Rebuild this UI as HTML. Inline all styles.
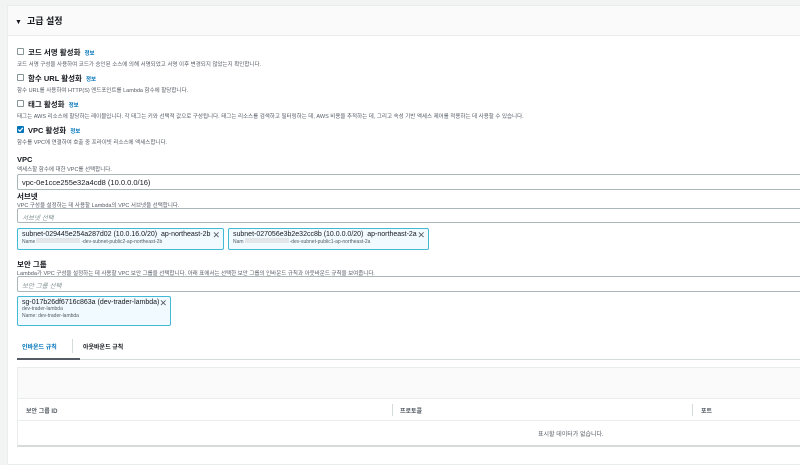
<!DOCTYPE html>
<html><head><meta charset="utf-8"><style>
*{margin:0;padding:0;box-sizing:border-box}
body{width:800px;height:450px;overflow:hidden;background:#f2f3f3;font-family:"Liberation Sans","Noto Sans CJK KR",sans-serif;color:#16191f;position:relative}
.card{position:absolute;left:7px;top:5px;width:800px;height:460px;background:#fff;border:1px solid #eaeded}
.hdr{position:absolute;left:0;top:0;width:100%;height:30px;background:#fafafa;border-bottom:1px solid #eaeded}
.a{position:absolute;white-space:nowrap}
.t{font-size:9px;font-weight:bold}
.b{font-size:7.5px;font-weight:bold}
.d{font-size:5.5px;color:#545b64}
.info{color:#0073bb;font-size:5.5px;font-weight:bold;margin-left:4px}
.cb{position:absolute;width:7px;height:7px;border:1px solid #879596;border-radius:1px;background:#fff}
.cb.on{background:#0073bb;border-color:#0073bb}
.in{position:absolute;left:16px;width:800px;height:16px;border:1px solid #aab7b8;border-radius:2px;font-size:7.5px;padding:3px 4px}
.ph{color:#879596;font-style:italic;font-size:6.5px}
.tok{position:absolute;background:#f1faff;border:1px solid #44b9d6;border-radius:2px;padding:2px 4px;white-space:nowrap}
.tok .m{font-size:7px}
.tok .s{font-size:5px;color:#545b64;line-height:7px}
.x{position:absolute;right:3px;top:1px;font-size:9px;color:#545b64}
</style></head><body>
<div class="card">
<div class="hdr"></div>
<div class="a t" style="left:7px;top:8px"><span style="font-size:7px">▼</span>&nbsp; 고급 설정</div>

<div class="cb" style="left:9px;top:42px"></div>
<div class="a b" style="left:20px;top:41px">코드 서명 활성화<span class="info">정보</span></div>
<div class="a d" style="left:9px;top:54px">코드 서명 구성을 사용하여 코드가 승인된 소스에 의해 서명되었고 서명 이후 변경되지 않았는지 확인합니다.</div>

<div class="cb" style="left:9px;top:68px"></div>
<div class="a b" style="left:20px;top:67px">함수 URL 활성화<span class="info">정보</span></div>
<div class="a d" style="left:9px;top:80px">함수 URL를 사용하여 HTTP(S) 엔드포인트를 Lambda 함수에 할당합니다.</div>

<div class="cb" style="left:9px;top:94px"></div>
<div class="a b" style="left:20px;top:93px">태그 활성화<span class="info">정보</span></div>
<div class="a d" style="left:9px;top:106px">태그는 AWS 리소스에 할당하는 레이블입니다. 각 태그는 키와 선택적 값으로 구성됩니다. 태그는 리소스를 검색하고 필터링하는 데, AWS 비용을 추적하는 데, 그리고 속성 기반 액세스 제어를 적용하는 데 사용할 수 있습니다.</div>

<div class="cb on" style="left:9px;top:120px"><svg width="7" height="7" viewBox="0 0 7 7" style="position:absolute;left:-1px;top:-1px"><path d="M1.3 3.6l1.6 1.6 2.9-3.4" stroke="#fff" stroke-width="1.2" fill="none"/></svg></div>
<div class="a b" style="left:20px;top:119px">VPC 활성화<span class="info">정보</span></div>
<div class="a d" style="left:9px;top:132px">함수를 VPC에 연결하여 호출 중 프라이빗 리소스에 액세스합니다.</div>

<div class="a b" style="left:9px;top:149px">VPC</div>
<div class="a d" style="left:9px;top:159px">액세스할 함수에 대한 VPC를 선택합니다.</div>
<div class="in" style="left:9px;top:168px">vpc-0e1cce255e32a4cd8 (10.0.0.0/16)</div>

<div class="a b" style="left:9px;top:185px">서브넷</div>
<div class="a d" style="left:9px;top:195px">VPC 구성을 설정하는 데 사용할 Lambda의 VPC 서브넷을 선택합니다.</div>
<div class="in" style="left:9px;top:202px;height:15px"><span class="ph">서브넷 선택</span></div>

<div class="tok" style="left:9px;top:222px;width:207px;height:22px"><div class="m">subnet-029445e254a287d02 (10.0.16.0/20)&nbsp; ap-northeast-2b</div><div class="s">Name<span style="display:inline-block;width:44px;height:5px;background:#e3e6e8;margin:0 1px"></span>-dev-subnet-public2-ap-northeast-2b</div><span class="x">✕</span></div>
<div class="tok" style="left:220px;top:222px;width:201px;height:22px"><div class="m">subnet-027056e3b2e32cc8b (10.0.0.0/20)&nbsp; ap-northeast-2a</div><div class="s">Nam<span style="display:inline-block;width:44px;height:5px;background:#e3e6e8;margin:0 1px"></span>-dev-subnet-public1-ap-northeast-2a</div><span class="x">✕</span></div>

<div class="a b" style="left:9px;top:253px">보안 그룹</div>
<div class="a d" style="left:9px;top:263px">Lambda가 VPC 구성을 설정하는 데 사용할 VPC 보안 그룹을 선택합니다. 아래 표에서는 선택한 보안 그룹의 인바운드 규칙과 아웃바운드 규칙을 보여줍니다.</div>
<div class="in" style="left:9px;top:270px;height:16px"><span class="ph">보안 그룹 선택</span></div>

<div class="tok" style="left:9px;top:290px;width:154px;height:30px"><div class="m">sg-017b26df6716c863a (dev-trader-lambda)</div><div class="s">dev-trader-lambda</div><div class="s">Name: dev-trader-lambda</div><span class="x">✕</span></div>

<div class="a" style="left:14px;top:336px;font-size:6px;font-weight:bold;color:#0073bb">인바운드 규칙</div>
<div style="position:absolute;left:64px;top:333px;width:1px;height:14px;background:#d5dbdb"></div>
<div class="a" style="left:75px;top:336px;font-size:6px;font-weight:bold;color:#16191f">아웃바운드 규칙</div>
<div style="position:absolute;left:9px;top:353px;width:800px;height:1px;background:#d5dbdb"></div>
<div style="position:absolute;left:9px;top:352px;width:63px;height:2px;background:#545b64"></div>

<div style="position:absolute;left:9px;top:361px;width:800px;height:80px;border:1px solid #eaeded;border-bottom:2px solid #d5dbdb;background:#fff">
<div style="position:absolute;left:0;top:0;width:100%;height:30px;background:#fafafa"></div>
<div style="position:absolute;left:0;top:30px;width:100%;height:1px;background:#eaeded"></div>
<div style="position:absolute;left:0;top:52px;width:100%;height:1px;background:#eaeded"></div>
<div style="position:absolute;left:374px;top:36px;width:1px;height:12px;background:#d5dbdb"></div>
<div style="position:absolute;left:674px;top:36px;width:1px;height:12px;background:#d5dbdb"></div>
<div class="a" style="left:8px;top:38px;font-size:6px;font-weight:bold;color:#545b64">보안 그룹 ID</div>
<div class="a" style="left:382px;top:38px;font-size:6px;font-weight:bold;color:#545b64">프로토콜</div>
<div class="a" style="left:683px;top:38px;font-size:6px;font-weight:bold;color:#545b64">포트</div>
<div class="a" style="left:520px;top:61px;font-size:6px;color:#545b64">표시할 데이터가 없습니다.</div>
</div>
</div>
</body></html>
